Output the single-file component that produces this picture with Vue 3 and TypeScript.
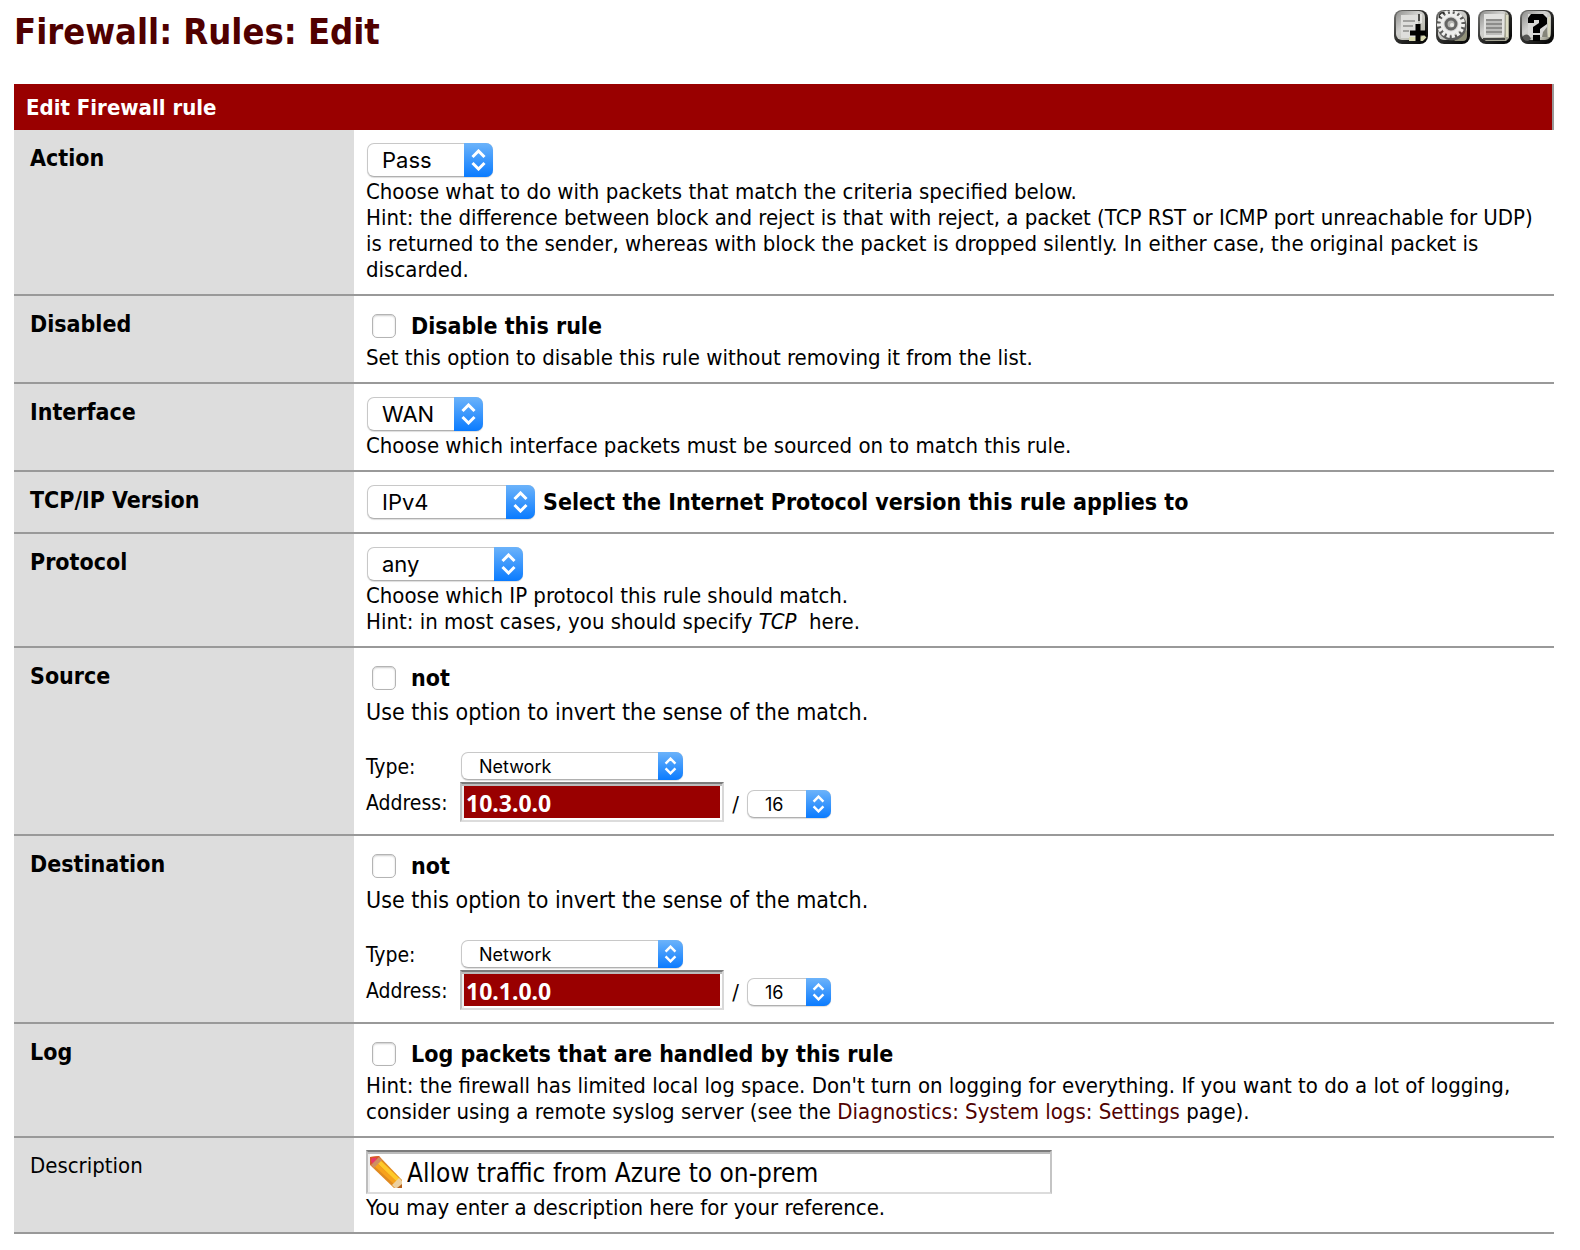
<script setup lang="ts">
import { reactive } from 'vue'

interface Endpoint {
  key: string
  label: string
  not: boolean
  type: string
  address: string
  mask: string
}

const rule = reactive({
  action: 'Pass',
  disabled: false,
  iface: 'WAN',
  version: 'IPv4',
  protocol: 'any',
  log: false,
  description: 'Allow traffic from Azure to on-prem',
})

const endpoints = reactive<Endpoint[]>([
  { key: 'src', label: 'Source', not: false, type: 'Network', address: '10.3.0.0', mask: '16' },
  { key: 'dst', label: 'Destination', not: false, type: 'Network', address: '10.1.0.0', mask: '16' },
])

const shortcuts = [
  { id: 'add', title: 'Add' },
  { id: 'settings', title: 'Settings' },
  { id: 'log', title: 'Logs' },
  { id: 'help', title: 'Help' },
]
</script>

<template>
  <main class="page">
    <header class="top">
      <h1>Firewall: Rules: Edit</h1>
      <nav class="shortcuts">
        <button v-for="s in shortcuts" :key="s.id" type="button" class="shortcut" :aria-label="s.title">
          <svg viewBox="0 0 34 34" width="34" height="34" aria-hidden="true">
            <defs>
              <linearGradient :id="'rim-' + s.id" x1="0" y1="0" x2="1" y2="1">
                <stop offset="0" stop-color="#777775" />
                <stop offset="0.5" stop-color="#2c2c2a" />
                <stop offset="1" stop-color="#000" />
              </linearGradient>
              <linearGradient :id="'face-' + s.id" x1="0" y1="0" x2="1" y2="1">
                <stop offset="0" stop-color="#8e8e8c" />
                <stop offset="0.4" stop-color="#cfcfcd" />
                <stop offset="0.8" stop-color="#bdbdb2" />
                <stop offset="1" stop-color="#7c7c6c" />
              </linearGradient>
            </defs>
            <rect width="34" height="34" rx="8" :fill="`url(#rim-${s.id})`" />
            <rect x="2" y="1" width="29" height="29" rx="6" :fill="`url(#face-${s.id})`" />
            <g v-if="s.id === 'add'">
              <path d="M7 5H24V28H7Z" fill="#dededc" />
              <path d="M25 4V11" stroke="#4c4c4a" stroke-width="2" />
              <path d="M27 4V13" stroke="#e4e4e0" stroke-width="2" />
              <path d="M9 11H21M9 16H19M9 21H15" stroke="#a2a2a0" stroke-width="2" />
              <path d="M15 29H28L31 26" fill="none" stroke="#d8d8b0" stroke-width="4" />
              <path d="M24 14V31M16 23H32" stroke="#000" stroke-width="5" />
            </g>
            <g v-else-if="s.id === 'settings'">
              <path d="M3 17V6Q3 2 7 2H12Z" fill="#2c2c2a" />
              <path d="M18 31L31 20V26Q31 31 27 31Z" fill="#8f8f78" />
              <circle cx="16" cy="16" r="12" fill="none" stroke="#5c5c5a" stroke-width="5" />
              <circle cx="15" cy="14" r="12" fill="none" stroke="#f0f0ee" stroke-width="4" stroke-dasharray="3 2" />
              <circle cx="15" cy="14" r="9" fill="#d6d6d4" stroke="#eeeeec" stroke-width="3" />
              <circle cx="15" cy="14" r="5" fill="#b4b4b0" stroke="#656563" stroke-width="3" />
              <circle cx="16" cy="15" r="2" fill="#ecece8" />
            </g>
            <g v-else-if="s.id === 'log'">
              <path d="M27 2L31 6V28L28 31H8L5 29H27Z" fill="#a5a594" />
              <path d="M29 5V27" stroke="#dcdcc4" stroke-width="2" />
              <path d="M5 29H27" stroke="#444442" stroke-width="2" />
              <rect x="6" y="4" width="20" height="23" fill="#e2e2e0" />
              <path d="M8 10H24M8 14H24M8 18H24M8 22H24" stroke="#8c8c8a" stroke-width="2" />
              <path d="M8 12H24M8 16H24M8 20H24M8 24H24" stroke="#bcbcba" stroke-width="2" />
            </g>
            <g v-else>
              <path d="M8 4H27V27H8Z" fill="#d8d8d6" />
              <path d="M3 26Q8 22 11 29L8 31Q4 31 3 28Z" fill="#555553" />
              <path d="M23 22L27 17V27H22Z" fill="#85857a" />
              <path d="M29 7V27" stroke="#d8d8c0" stroke-width="2" />
              <path d="M8 12V8L11 4H23L27 8V14L20 19V23H13V17L19 13V10H14V13H8Z" fill="#000" />
              <rect x="13" y="25" width="7" height="6" fill="#000" />
            </g>
          </svg>
        </button>
      </nav>
    </header>

    <form class="rules" @submit.prevent>
      <h2>Edit Firewall rule</h2>

      <div class="row">
        <label class="name" for="action">Action</label>
        <div class="value">
          <div class="line">
            <span class="pick w-action">
              <select id="action" v-model="rule.action">
                <option>Pass</option>
                <option>Block</option>
                <option>Reject</option>
              </select>
              <svg viewBox="0 0 14 22" aria-hidden="true"><path d="M1 8L7 2L13 8M1 14L7 20L13 14" /></svg>
            </span>
          </div>
          <p>
            Choose what to do with packets that match the criteria specified below.<br />
            Hint: the difference between block and reject is that with reject, a packet (TCP RST or ICMP port
            unreachable for UDP) is returned to the sender, whereas with block the packet is dropped silently. In
            either case, the original packet is discarded.
          </p>
        </div>
      </div>

      <div class="row">
        <span class="name">Disabled</span>
        <div class="value">
          <div class="line">
            <label class="check"><input v-model="rule.disabled" type="checkbox" />Disable this rule</label>
          </div>
          <p>Set this option to disable this rule without removing it from the list.</p>
        </div>
      </div>

      <div class="row">
        <label class="name" for="iface">Interface</label>
        <div class="value">
          <div class="line">
            <span class="pick w-iface">
              <select id="iface" v-model="rule.iface">
                <option>WAN</option>
                <option>LAN</option>
              </select>
              <svg viewBox="0 0 14 22" aria-hidden="true"><path d="M1 8L7 2L13 8M1 14L7 20L13 14" /></svg>
            </span>
          </div>
          <p>Choose which interface packets must be sourced on to match this rule.</p>
        </div>
      </div>

      <div class="row">
        <label class="name" for="version">TCP/IP Version</label>
        <div class="value">
          <div class="line">
            <span class="pick w-version">
              <select id="version" v-model="rule.version">
                <option>IPv4</option>
                <option>IPv6</option>
                <option>IPv4+IPv6</option>
              </select>
              <svg viewBox="0 0 14 22" aria-hidden="true"><path d="M1 8L7 2L13 8M1 14L7 20L13 14" /></svg>
            </span>
            <strong>Select the Internet Protocol version this rule applies to</strong>
          </div>
        </div>
      </div>

      <div class="row">
        <label class="name" for="protocol">Protocol</label>
        <div class="value">
          <div class="line">
            <span class="pick w-protocol">
              <select id="protocol" v-model="rule.protocol">
                <option>any</option>
                <option>TCP</option>
                <option>UDP</option>
                <option>ICMP</option>
              </select>
              <svg viewBox="0 0 14 22" aria-hidden="true"><path d="M1 8L7 2L13 8M1 14L7 20L13 14" /></svg>
            </span>
          </div>
          <p>
            Choose which IP protocol this rule should match.<br />
            Hint: in most cases, you should specify <em>TCP</em>&nbsp; here.
          </p>
        </div>
      </div>

      <div v-for="e in endpoints" :key="e.key" class="row">
        <span class="name">{{ e.label }}</span>
        <div class="value">
          <div class="line">
            <label class="check"><input v-model="e.not" type="checkbox" />not</label>
          </div>
          <p class="invert">Use this option to invert the sense of the match.</p>
          <div class="endpoint">
            <label :for="e.key + '-type'">Type:</label>
            <div class="cell">
              <span class="pick small w-type">
                <select :id="e.key + '-type'" v-model="e.type">
                  <option>Network</option>
                  <option>any</option>
                </select>
                <svg viewBox="0 0 14 22" aria-hidden="true"><path d="M1 8L7 2L13 8M1 14L7 20L13 14" /></svg>
              </span>
            </div>
            <label :for="e.key + '-address'">Address:</label>
            <div class="cell">
              <input :id="e.key + '-address'" v-model="e.address" class="address" type="text" />
              <span class="slash">/</span>
              <span class="pick small w-mask">
                <select v-model="e.mask" :aria-label="e.label + ' mask'">
                  <option>16</option>
                  <option>24</option>
                  <option>32</option>
                </select>
                <svg viewBox="0 0 14 22" aria-hidden="true"><path d="M1 8L7 2L13 8M1 14L7 20L13 14" /></svg>
              </span>
            </div>
          </div>
        </div>
      </div>

      <div class="row">
        <span class="name">Log</span>
        <div class="value">
          <div class="line">
            <label class="check"><input v-model="rule.log" type="checkbox" />Log packets that are handled by this rule</label>
          </div>
          <p>
            Hint: the firewall has limited local log space. Don't turn on logging for everything. If you want to do a
            lot of logging, consider using a remote syslog server (see the
            <a href="#">Diagnostics: System logs: Settings</a> page).
          </p>
        </div>
      </div>

      <div class="row">
        <label class="name plain" for="descr">Description</label>
        <div class="value">
          <div class="descr">
            <svg viewBox="0 0 32 32" width="32" height="32" aria-hidden="true">
              <path d="M0 1L9 0L32 24V32H24L0 9Z" fill="#e08a20" />
              <path d="M8 2L31 24L28 27L5 5Z" fill="#ffc928" />
              <path d="M5 5L28 27L25 29L2 8Z" fill="#f7a21b" />
              <path d="M0 1L9 0L11 3L3 11L0 8Z" fill="#d9552c" />
              <path d="M2 2H6L7 6L3 8L1 5Z" fill="#e8386a" />
              <path d="M9 1L12 4L4 12L1 9Z" fill="#cf8f62" />
              <path d="M29 22L32 25V32H25L22 29Z" fill="#ecd0a0" />
              <path d="M32 28V32H27Z" fill="#b5601c" />
            </svg>
            <input id="descr" v-model="rule.description" type="text" />
          </div>
          <p>You may enter a description here for your reference.</p>
        </div>
      </div>
    </form>
  </main>
</template>

<style>
body {
  margin: 0;
  background: #fff;
}
</style>

<style scoped>
.page {
  box-sizing: border-box;
  padding: 10px 26px 16px 14px;
  font: 22px/26px Tahoma, 'DejaVu Sans Condensed', 'DejaVu Sans', sans-serif;
  color: #000;
}
.top {
  display: flex;
  justify-content: space-between;
  align-items: flex-start;
  height: 74px;
}
h1 {
  margin: 0;
  font-size: 36px;
  line-height: 44px;
  color: #500000;
}
.shortcuts {
  display: flex;
  gap: 8px;
}
.shortcut {
  width: 34px;
  height: 34px;
  padding: 0;
  border: 0;
  background: none;
}
.shortcut svg {
  display: block;
}
h2 {
  margin: 0;
  padding: 11px 12px 9px;
  border-right: 2px solid #999;
  background: #990000;
  color: #fff;
  font-size: 22px;
  line-height: 26px;
}
.row {
  display: grid;
  grid-template-columns: 340px minmax(0, 1fr);
  border-bottom: 2px solid #999;
}
.name {
  padding: 15px 16px 0;
  background: #ddd;
  font-size: 23px;
  font-weight: bold;
}
.name.plain {
  font-size: 22px;
  font-weight: normal;
}
.value {
  padding: 12px 12px 11px;
}
.line {
  display: flex;
  align-items: center;
  gap: 8px;
  height: 36px;
  margin-bottom: 1px;
}
p {
  margin: 0;
}
strong,
.check {
  font-size: 23px;
  font-weight: bold;
}
a {
  color: #500000;
  text-decoration: none;
}
.pick {
  position: relative;
  display: block;
  flex: none;
  height: 34px;
}
.pick select {
  appearance: none;
  box-sizing: border-box;
  display: block;
  width: 100%;
  height: 100%;
  margin: 0;
  padding: 0 30px 0 14px;
  border: 1px solid #c8c8c8;
  border-bottom-color: #b0b0b0;
  border-radius: 7px;
  background: #fff;
  box-shadow: 0 1px 1px #ddd;
  color: #000;
  font: 22px/30px Inter, sans-serif;
}
.pick svg {
  position: absolute;
  top: 0;
  right: 0;
  box-sizing: border-box;
  width: 29px;
  height: 34px;
  padding: 6px 7px;
  border-radius: 0 7px 7px 0;
  background: linear-gradient(#6cb3fa, #0a7bff);
  pointer-events: none;
}
.pick path {
  fill: none;
  stroke: #fff;
  stroke-width: 3;
}
.pick.small {
  height: 28px;
}
.pick.small select {
  padding: 2px 26px 0 17px;
  font-size: 18px;
  line-height: 24px;
}
.pick.small svg {
  width: 25px;
  height: 28px;
  padding: 5px 6px;
}
.line .pick {
  margin-left: 1px;
}
.w-action {
  width: 126px;
}
.w-iface {
  width: 116px;
}
.w-version {
  width: 168px;
}
.w-protocol {
  width: 156px;
}
.w-type {
  width: 222px;
}
.w-mask {
  width: 84px;
}
.check {
  display: flex;
  align-items: center;
  gap: 15px;
}
.check input {
  appearance: none;
  box-sizing: border-box;
  width: 24px;
  height: 24px;
  margin: 0 0 0 6px;
  border: 1px solid #b4b4b4;
  border-radius: 5px;
  background: #fff;
  box-shadow: inset 0 1px 2px #ccc;
}
.invert {
  padding: 2px 0 25px;
  font-size: 23px;
}
.endpoint {
  display: grid;
  grid-template-columns: 94px minmax(0, 1fr);
  grid-template-rows: 32px 40px;
  align-items: center;
  margin-bottom: 1px;
}
.endpoint > label {
  padding-top: 2px;
  font-size: 21px;
}
.cell {
  display: flex;
  align-items: flex-end;
  height: 100%;
}
.w-type {
  margin-bottom: 2px;
  margin-left: 1px;
}
.address {
  box-sizing: border-box;
  width: 264px;
  height: 40px;
  padding: 2px 4px 0;
  border: 2px solid;
  border-color: #7c7c7c #d8d8d8 #dcdcdc #bebebe;
  background: #990000;
  box-shadow:
    inset 0 2px #bcbcbc,
    inset 2px 0 #eee,
    inset -2px 0 #fff,
    inset 0 -2px #fff;
  color: #fff;
  font: bold 23px/28px 'Noto Sans', sans-serif;
}
.slash,
.w-mask {
  margin-bottom: 4px;
}
.slash {
  width: 23px;
  text-align: center;
}
.descr {
  display: flex;
  align-items: center;
  gap: 5px;
  box-sizing: border-box;
  max-width: 686px;
  height: 44px;
  margin-bottom: 1px;
  padding: 0 2px;
  border: 2px solid;
  border-color: #7c7c7c #c4c4c4 #dcdcdc #bebebe;
  box-shadow:
    inset 0 2px #bcbcbc,
    inset 2px 0 #eee;
}
.descr svg {
  flex: none;
}
.descr input {
  flex: 1;
  min-width: 0;
  padding: 2px 0 0;
  border: 0;
  outline: 0;
  background: none;
  color: #000;
  font: 26px/32px Tahoma, 'DejaVu Sans Condensed', 'DejaVu Sans', sans-serif;
}
</style>
